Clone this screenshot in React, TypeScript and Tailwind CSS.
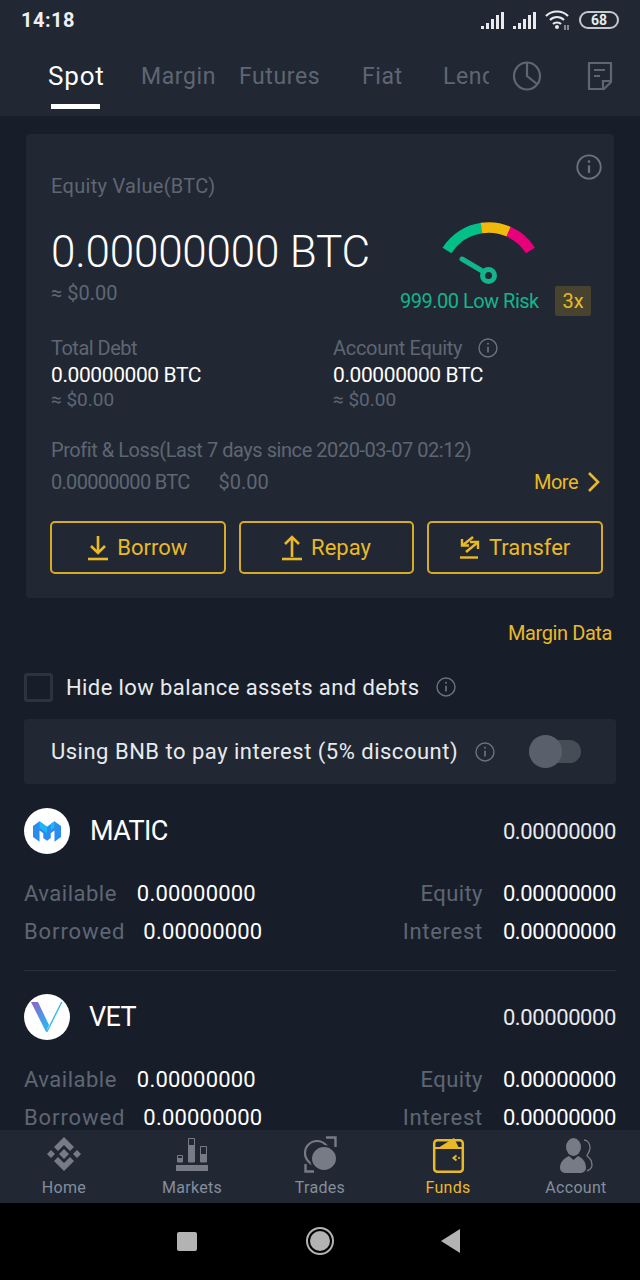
import React from "react";

const Info = ({ size, color = "#6b7280" }: { size: number; color?: string }) => (
  <svg width={size} height={size} viewBox="0 0 24 24" fill="none" stroke={color} strokeWidth="1.7" className="shrink-0">
    <circle cx="12" cy="12" r="10.8" />
    <path d="M12 10.5v7" strokeWidth="2" />
    <circle cx="12" cy="7" r="1.2" fill={color} stroke="none" />
  </svg>
);

const Gauge = () => (
  <svg width="100" height="66" viewBox="0 0 100 66" fill="none">
    <path d="M6 30.500 A 49.400 49.400 0 0 1 41 8" stroke="#02c087" strokeWidth="10.500" />
    <path d="M40.500 8 A 49.400 49.400 0 0 1 68 11.800" stroke="#f0b90b" strokeWidth="10.500" />
    <path d="M67.500 11.600 A 49.400 49.400 0 0 1 89.500 30.500" stroke="#e6007a" strokeWidth="10.500" />
    <path d="M21 39 L43 52" stroke="#12b58c" strokeWidth="5" strokeLinecap="round" />
    <circle cx="47.500" cy="55.500" r="6" stroke="#12b58c" strokeWidth="5" />
  </svg>
);

const Borrow = () => (
  <svg width="20" height="26" viewBox="0 0 20 26" fill="none" stroke="#eab928" strokeWidth="2.600">
    <path d="M10 1v17M3 11l7 7 7-7" />
    <path d="M0 24h20" />
  </svg>
);

const Repay = () => (
  <svg width="20" height="26" viewBox="0 0 20 26" fill="none" stroke="#eab928" strokeWidth="2.600">
    <path d="M10 22V3M3 9l7-7 7 7" />
    <path d="M0 24h20" />
  </svg>
);

const Transfer = () => (
  <svg width="20" height="24" viewBox="0 0 20 24" fill="none" stroke="#eab928" strokeWidth="2.400">
    <path d="M13 1L3 9" />
    <path d="M2 3v6.500h7" />
    <path d="M6 16L17 7" />
    <path d="M10 6h8v7" />
    <path d="M0 21.500h18" />
  </svg>
);

const MaticLogo = () => (
  <svg width="28" height="23" viewBox="0 0 30 24">
    <path d="M0 6l7-5 8 6 8-6 7 5v12l-7 5v-12l-4 3v5l-4 3-4-3v-5l-4-3v12l-7-5z" fill="#2b8cf0" />
    <path d="M7 1l8 6v7l-8-6zM23 1v7l-4 3v-7z" fill="#1fb6f5" />
  </svg>
);

const VetLogo = () => (
  <svg width="32" height="30" viewBox="0 0 32 30" fill="none">
    <defs>
      <linearGradient id="vetLeft" x1="0" y1="0" x2="0.6" y2="1">
        <stop offset="0" stopColor="#8f62c9" />
        <stop offset="1" stopColor="#2fb4f0" />
      </linearGradient>
    </defs>
    <path d="M0 0h7l11 23-3 7z" fill="url(#vetLeft)" />
    <path d="M15 30L30 0h1.500L16.500 30z" fill="#2cb6f0" />
  </svg>
);

const AssetRow = ({
  name,
  logo,
  nameClass,
  bordered,
}: {
  name: string;
  logo: React.ReactNode;
  nameClass: string;
  bordered?: boolean;
}) => (
  <div className={`mx-6 h-[163px] ${bordered ? "border-b border-[#2a303b]" : ""}`}>
    <div className="flex h-[46px] items-center justify-between">
      <div className="flex items-center">
        <div className="flex h-[46px] w-[46px] items-center justify-center rounded-full bg-white">{logo}</div>
        <span className={`text-[27px] tracking-[-0.6px] text-white ${nameClass}`}>{name}</span>
      </div>
      <span className="text-[22px] tracking-[-0.4px] text-[#e8eaed]">0.00000000</span>
    </div>
    <div className="mt-[27px] flex h-[24px] items-center justify-between text-[22px]">
      <div className="flex items-center gap-[20px]">
        <span className="tracking-[0.5px] text-[#5f6673]">Available</span>
        <span className="tracking-[0.2px] text-white">0.00000000</span>
      </div>
      <div className="flex items-center gap-[20px]">
        <span className="tracking-[0.4px] text-[#5f6673]">Equity</span>
        <span className="tracking-[-0.4px] text-white">0.00000000</span>
      </div>
    </div>
    <div className="mt-[14px] flex h-[24px] items-center justify-between text-[22px]">
      <div className="flex items-center gap-[18px]">
        <span className="tracking-[0.9px] text-[#5f6673]">Borrowed</span>
        <span className="tracking-[0.2px] text-white">0.00000000</span>
      </div>
      <div className="flex items-center gap-[20px]">
        <span className="tracking-[0.7px] text-[#5f6673]">Interest</span>
        <span className="tracking-[-0.4px] text-white">0.00000000</span>
      </div>
    </div>
  </div>
);

const navItems = [
  {
    label: "Home",
    icon: (
      <svg width="34" height="34" viewBox="0 0 34 34" fill="#767b85">
        <path d="M17 0l10 10-4 4-6-6-6 6-4-4zM17 34L7 24l4-4 6 6 6-6 4 4zM4 13l4 4-4 4-4-4zM30 13l4 4-4 4-4-4zM17 12l5 5-5 5-5-5z" />
      </svg>
    ),
  },
  {
    label: "Markets",
    icon: (
      <svg width="34" height="36" viewBox="0 0 34 36" fill="#767b85">
        <rect x="1" y="29" width="32" height="6" />
        <path d="M2.500 19.500h5v6.500h-5z" fill="none" stroke="#767b85" strokeWidth="1" />
        <path d="M2 22h6v4H2z" />
        <path d="M13.500 2.500h6v23.500h-6z" fill="none" stroke="#767b85" strokeWidth="1" />
        <path d="M13 9h7v17h-7z" />
        <path d="M25.500 10.500h6v15.500h-6z" fill="none" stroke="#767b85" strokeWidth="1" />
        <path d="M25 18h7v8h-7z" />
      </svg>
    ),
  },
  {
    label: "Trades",
    icon: (
      <svg width="34" height="38" viewBox="0 0 34 38" fill="none">
        <circle cx="14" cy="18" r="12" stroke="#767b85" strokeWidth="2.200" />
        <ellipse cx="21" cy="23.500" rx="13" ry="12.500" fill="#767b85" stroke="#212833" strokeWidth="2" />
        <path d="M23 2.500h9.500V12M2.500 29v7.500H11" stroke="#767b85" strokeWidth="2.400" />
      </svg>
    ),
  },
  {
    label: "Funds",
    active: true,
    icon: (
      <svg width="34" height="38" viewBox="0 0 34 38" fill="none">
        <rect x="3.200" y="5.200" width="28.600" height="31.600" rx="3" stroke="#eab928" strokeWidth="2.500" />
        <path d="M3 13h28" stroke="#eab928" strokeWidth="2" />
        <path d="M7 13L23 3l5 10z" fill="#eab928" />
        <path d="M25.500 20.500l-3 2.500 3 2.500" stroke="#eab928" strokeWidth="2" />
        <circle cx="28" cy="23" r="1.100" fill="#eab928" />
      </svg>
    ),
  },
  {
    label: "Account",
    icon: (
      <svg width="34" height="38" viewBox="0 0 34 38" fill="#767b85">
        <ellipse cx="14.500" cy="12" rx="7.500" ry="9" />
        <path d="M1 33c0-7 5-10 9-12l4.500 4 4.500-4c4 2 8 5 8 12 0 3-3 5-6 5H7c-3 0-6-2-6-5z" />
        <path d="M25 5c4 0 6 4 6 8s-3 6-3 8c3 2 5 5 5 9s-3 5-5 6" fill="none" stroke="#767b85" strokeWidth="1.300" />
      </svg>
    ),
  },
];

export default function App() {
  return (
    <div className="flex h-[1280px] w-[640px] flex-col overflow-hidden bg-[#181e29] font-['Roboto',sans-serif]">
      <header className="h-[116px] shrink-0 bg-[#212833]">
        <div className="flex h-[40px] items-center justify-between pl-[21px] pr-[21px]">
          <span className="text-[20px] font-bold tracking-[0.5px] text-[#eef0f2]">14:18</span>
          <div className="flex items-center gap-[9px]">
            <svg width="57" height="17" viewBox="0 0 57 17" fill="#e8eaed">
              <path d="M0 14h3v3H0zM5 11h3v6H5zM10 7h3v10h-3zM15 3h3v14h-3zM20 0h3v17h-3z" />
              <path d="M32 14h3v3h-3zM37 11h3v6h-3zM42 7h3v10h-3zM47 3h3v14h-3zM52 0h3v17h-3z" />
            </svg>
            <svg width="25" height="20" viewBox="0 0 25 20" fill="none" stroke="#e8eaed" strokeWidth="2.200" className="-ml-[2px]">
              <path d="M1 6c6-6 16-6 22 0M5 10c4-4 10-4 14 0M8 14c2-2 6-2 8 0" />
              <circle cx="12" cy="17" r="2" fill="#e8eaed" stroke="none" />
              <path d="M20 15v5M23 15v5" strokeWidth="1" />
            </svg>
            <div className="flex h-[18px] w-[40px] items-center justify-center rounded-[9px] border-2 border-[#c5c8cc] text-[14px] font-bold leading-none text-[#e8eaed]">
              68
            </div>
          </div>
        </div>
        <nav className="relative flex h-[76px] items-start text-[23px] tracking-[0.6px] text-[#5f6673]">
          <div className="flex w-[489px] overflow-hidden pl-[48px] pt-[19px]">
            <span className="-mt-px w-[93px] shrink-0 text-[26px] leading-[36px] tracking-[0.8px] text-white">Spot</span>
            <span className="w-[98px] shrink-0 leading-[36px]">Margin</span>
            <span className="w-[123px] shrink-0 leading-[36px]">Futures</span>
            <span className="w-[81px] shrink-0 leading-[36px]">Fiat</span>
            <span className="shrink-0 leading-[36px]">Lending</span>
          </div>
          <svg width="30" height="30" viewBox="0 0 30 30" fill="none" stroke="#5f6673" strokeWidth="2.200" className="ml-[23px] mt-[21px]">
            <ellipse cx="15" cy="15" rx="13" ry="13.500" />
            <path d="M15 2v13l10 8" />
          </svg>
          <svg width="26" height="30" viewBox="0 0 26 30" fill="none" stroke="#5f6673" strokeWidth="2.200" className="ml-[45px] mt-[21px]">
            <path d="M2 2h22v19l-7 7H2z" />
            <path d="M7 9h11M7 15h6M24 20h-8v8" />
          </svg>
          <div className="absolute left-[51px] top-[64px] h-[5px] w-[49px] bg-white" />
        </nav>
      </header>

      <main className="min-h-0 flex-1 overflow-hidden">
        <section className="mx-[26px] mt-[18px] h-[464px] rounded-[4px] bg-[#212833] pl-[25px] pr-[11px] pt-[20px]">
          <div className="flex justify-end pr-[1px]">
            <Info size={26} />
          </div>
          <div className="flex">
            <div className="flex-1">
              <p className="mt-[-6px] text-[20px] leading-[24px] tracking-[0.3px] text-[#5f6673]">Equity Value(BTC)</p>
              <p className="mt-[28px] whitespace-nowrap text-[44px] font-light leading-[52px] tracking-[-0.2px] text-white">0.00000000 BTC</p>
              <p className="mt-[2px] text-[20px] leading-[26px] text-[#5f6673]">≈ $0.00</p>
            </div>
            <div className="flex w-[203px] shrink-0 flex-col items-center pr-[12px] pt-[40px]">
              <div className="ml-[-9px]">
                <Gauge />
              </div>
              <div className="flex w-full items-center justify-between">
                <span className="whitespace-nowrap text-[20px] leading-[26px] tracking-[-0.5px] text-[#12b58c]">999.00 Low Risk</span>
                <span className="flex h-[30px] w-[36px] items-center justify-center rounded-[2px] bg-[#47432f] text-[20px] text-[#eab928]">3x</span>
              </div>
            </div>
          </div>

          <div className="mt-[19px] flex">
            <div className="w-[282px]">
              <p className="text-[20px] leading-[26px] tracking-[-0.5px] text-[#5f6673]">Total Debt</p>
              <p className="mt-[1px] text-[21px] leading-[26px] tracking-[-0.4px] text-white">0.00000000 BTC</p>
              <p className="text-[19px] leading-[24px] text-[#5f6673]">≈ $0.00</p>
            </div>
            <div>
              <p className="flex items-center gap-[16px] text-[20px] leading-[26px] tracking-[-0.3px] text-[#5f6673]">
                Account Equity <Info size={20} />
              </p>
              <p className="mt-[1px] text-[21px] leading-[26px] tracking-[-0.4px] text-white">0.00000000 BTC</p>
              <p className="text-[19px] leading-[24px] text-[#5f6673]">≈ $0.00</p>
            </div>
          </div>

          <p className="mt-[25px] text-[20px] leading-[26px] tracking-[-0.45px] text-[#5f6673]">Profit &amp; Loss(Last 7 days since 2020-03-07 02:12)</p>
          <div className="mt-[6px] flex h-[26px] items-center justify-between text-[20px] text-[#5f6673]">
            <div className="flex gap-[29px]">
              <span className="tracking-[-0.7px]">0.00000000 BTC</span>
              <span>$0.00</span>
            </div>
            <div className="flex items-center gap-[9px] pr-[3px] tracking-[-0.5px] text-[#eab928]">
              More
              <svg width="13" height="20" viewBox="0 0 13 20" fill="none" stroke="#eab928" strokeWidth="2.600">
                <path d="M2 1l9 9-9 9" />
              </svg>
            </div>
          </div>

          <div className="-ml-px mt-[26px] grid grid-cols-3 gap-[13px]">
            {[
              { label: "Borrow", icon: <Borrow /> },
              { label: "Repay", icon: <Repay /> },
              { label: "Transfer", icon: <Transfer /> },
            ].map((b) => (
              <button
                key={b.label}
                className="flex h-[53px] items-center justify-center gap-[9px] rounded-[5px] border-2 border-[#d6ab27] text-[22px] text-[#eab928]"
              >
                {b.icon}
                {b.label}
              </button>
            ))}
          </div>
        </section>

        <p className="mt-[22px] pr-[28px] text-right text-[20px] leading-[26px] tracking-[-0.4px] text-[#eab928]">Margin Data</p>

        <div className="ml-6 mt-[26px] flex h-[30px] items-center">
          <div className="h-[29px] w-[29px] rounded-[3px] border-[3px] border-[#2d333e]" />
          <span className="ml-[13px] text-[22px] tracking-[0.4px] text-[#e8eaed]">Hide low balance assets and debts</span>
          <span className="ml-[17px]">
            <Info size={20} />
          </span>
        </div>

        <div className="mx-6 mt-[17px] flex h-[65px] items-center rounded-[4px] bg-[#212833] pl-[27px]">
          <span className="text-[22px] tracking-[0.5px] text-[#e8eaed]">Using BNB to pay interest (5% discount)</span>
          <span className="ml-[17px]">
            <Info size={20} />
          </span>
          <div className="relative ml-[34px] h-[23px] w-[52px] rounded-full bg-[#474d57]">
            <div className="absolute -top-[5px] left-0 h-[33px] w-[33px] rounded-full bg-[#5a606b]" />
          </div>
        </div>

        <div className="mt-[24px] flex flex-col gap-[23px]">
          <AssetRow name="MATIC" nameClass="ml-[20px]" logo={<MaticLogo />} bordered />
          <AssetRow name="VET" nameClass="ml-[19px]" logo={<VetLogo />} />
        </div>
      </main>

      <nav className="grid h-[73px] shrink-0 grid-cols-5 bg-[#212833] pt-[4px]">
        {navItems.map((n) => (
          <div key={n.label} className="flex flex-col items-center">
            <div className="flex h-[40px] items-center">{n.icon}</div>
            <span className={`mt-[4px] text-[16px] leading-[20px] tracking-[0.3px] ${n.active ? "text-[#eab928]" : "text-[#848e9c]"}`}>
              {n.label}
            </span>
          </div>
        ))}
      </nav>

      <div className="flex h-[77px] shrink-0 items-center justify-center bg-black pb-[1px] pr-[3px]">
        <div className="h-[19px] w-[20px] rounded-[2px] bg-[#b3b3b3]" />
        <div className="ml-[109px] flex h-[28px] w-[28px] items-center justify-center rounded-full border-2 border-[#b3b3b3]">
          <div className="h-[20px] w-[20px] rounded-full bg-[#b3b3b3]" />
        </div>
        <svg width="19" height="24" viewBox="0 0 19 24" className="ml-[107px]">
          <path d="M19 0v24L0 12z" fill="#b3b3b3" />
        </svg>
      </div>
    </div>
  );
}
